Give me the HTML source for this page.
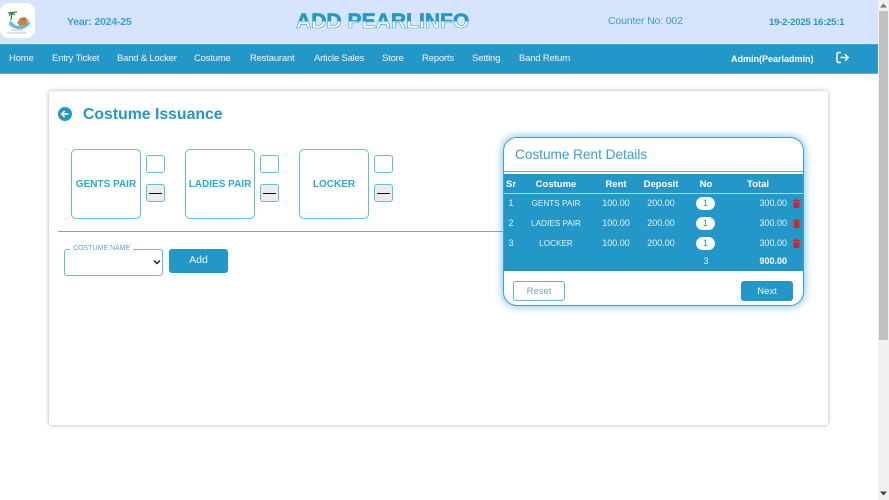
<!DOCTYPE html>
<html><head><meta charset="utf-8"><style>
html,body{margin:0;padding:0;width:889px;height:500px;overflow:hidden;background:#fff;font-family:"Liberation Sans",sans-serif}
.a{position:absolute;white-space:nowrap}
.c{text-align:center;transform:translateX(-50%)}
.r{text-align:right;transform:translateX(-100%)}
.nav{color:#eef7fb;font-size:9.500px;top:53px;letter-spacing:-.2px}
.tile{position:absolute;top:149px;width:68px;height:68px;border:1px solid #5cc0e4;border-radius:5px;background:#fff}
.tl{color:#2fa6d6;font-size:10px;font-weight:bold;top:179px}
.inp{position:absolute;top:155px;width:17px;height:16px;border:1px solid #5cc0e4;border-radius:3px;background:#fff}
.min{position:absolute;top:184px;width:17px;height:16px;border:1px solid #5cc0e4;border-radius:3px;background:#ececec}
.min i{position:absolute;left:2px;right:2px;top:7.500px;height:1.500px;background:#111}
.t{color:#e4f3f9;font-size:9px}
.n{font-size:8.200px;margin-top:1px}
.h{color:#fff;font-size:9.500px;font-weight:bold;top:179px}
.p{position:absolute;left:696px;width:19px;height:13px;background:#fff;border-radius:7px;color:#2497c9;font-size:9px;line-height:13px;text-align:center}
</style></head><body>
<div class="a" style="left:0;top:0;width:878px;height:44px;background:#d6e4fd"></div>
<div class="a" style="left:0;top:44px;width:878px;height:30px;background:#2497c9;box-sizing:border-box;border-top:1px solid #3aa6d6;border-bottom:1px solid #55b6dd"></div>
<div class="a" style="left:0;top:3px;width:35px;height:35px;background:#fff;border-radius:9px"></div>
<svg class="a" style="left:0;top:0" width="35" height="38" viewBox="0 0 35 38"><path d="M8 13L17 12M12 12.500L11 20M9 15.500L12 13L15 15" stroke="#2a7d4a" stroke-width="1.200" fill="none"/><path d="M10 20q4 6 10 6t9-6l1 4q-5 6-12 5t-9-5z" fill="#63bce3"/><path d="M17 23l3-5 5-1 3 3-2 5-6 1z" fill="#c9843f"/><path d="M22 19l3 1" stroke="#3e78a8" stroke-width="1"/><path d="M11 30h12M7 33h20" stroke="#a3adb5" stroke-width=".8"/></svg>
<div class="a" style="left:67px;top:16px;color:#3b9fcf;font-size:10.500px;font-weight:bold;letter-spacing:-.2px">Year: 2024-25</div>
<div class="a" style="left:296px;top:8px;font-size:21px;font-weight:bold;letter-spacing:.05px;line-height:27px;background:linear-gradient(#2497c9 0,#2497c9 50%,#fff 50%,#fff 100%);-webkit-background-clip:text;background-clip:text;color:transparent;-webkit-text-stroke:.6px #2e9fd0">ADD PEARLINFO</div>
<div class="a" style="left:608px;top:15px;color:#3b9fcf;font-size:10.500px;letter-spacing:-.15px">Counter No: 002</div>
<div class="a" style="left:769px;top:17px;color:#2e94c6;font-size:9.500px;font-weight:bold;letter-spacing:-.2px">19-2-2025 16:25:1</div>

<div class="a nav" style="left:9px">Home</div>
<div class="a nav" style="left:52px">Entry Ticket</div>
<div class="a nav" style="left:117px">Band &amp; Locker</div>
<div class="a nav" style="left:194px">Costume</div>
<div class="a nav" style="left:250px">Restaurant</div>
<div class="a nav" style="left:314px">Article Sales</div>
<div class="a nav" style="left:382px">Store</div>
<div class="a nav" style="left:422px">Reports</div>
<div class="a nav" style="left:472px">Setting</div>
<div class="a nav" style="left:519px">Band Return</div>
<div class="a nav" style="left:731px;font-size:9px;top:53.500px;font-weight:bold;color:#fff;letter-spacing:0">Admin(Pearladmin)</div>
<svg class="a" style="left:836px;top:51px" width="14" height="13" viewBox="0 0 14 13" fill="none" stroke="#fff" stroke-width="1.400"><path d="M5 1.500H2.500Q1 1.500 1 3V10Q1 11.500 2.500 11.500H5"/><path d="M4.500 6.500H12M9 3.300L12.300 6.500L9 9.700"/></svg>

<div class="a" style="left:49px;top:91px;width:779px;height:334px;background:#fff;border-radius:3px;box-shadow:0 0 5px rgba(0,0,0,.32)"></div>
<svg class="a" style="left:58px;top:107px" width="14" height="14" viewBox="0 0 14 14"><circle cx="7" cy="7" r="7" fill="#2497c9"/><path d="M10.500 7H4M6.700 4L3.700 7L6.700 10" stroke="#fff" stroke-width="1.600" fill="none"/></svg>
<div class="a" style="left:83px;top:106px;color:#2497c9;font-size:15.800px;font-weight:bold">Costume Issuance</div>

<div class="tile" style="left:71px"></div><div class="a tl c" style="left:106px">GENTS PAIR</div>
<div class="inp" style="left:146px"></div><div class="min" style="left:146px"><i></i></div>
<div class="tile" style="left:185px"></div><div class="a tl c" style="left:220px">LADIES PAIR</div>
<div class="inp" style="left:260px"></div><div class="min" style="left:260px"><i></i></div>
<div class="tile" style="left:299px"></div><div class="a tl c" style="left:334px">LOCKER</div>
<div class="inp" style="left:374px"></div><div class="min" style="left:374px"><i></i></div>

<div class="a" style="left:58px;top:231px;width:450px;height:1px;background:#5ab4d8"></div>

<div class="a" style="left:64px;top:249px;width:97px;height:25px;border:1px solid #5cc0e4;border-radius:3px"></div>
<div class="a" style="left:70px;top:245px;background:#fff;padding:0 3px;color:#5ba8cc;font-size:7px">COSTUME NAME</div>
<svg class="a" style="left:153px;top:259px" width="8" height="6" viewBox="0 0 8 6"><path d="M1 1.500L4 4.500L7 1.500" stroke="#222" stroke-width="1.500" fill="none"/></svg>
<div class="a" style="left:169px;top:249px;width:59px;height:24px;background:#2497c9;border-radius:3px;color:#eef7fb;font-size:10.500px;line-height:23px;text-align:center">Add</div>

<div class="a" style="left:503px;top:137px;width:299px;height:167px;background:#fff;border:1px solid #3ba3d3;border-radius:14px;box-shadow:0 0 7px 2px rgba(70,175,230,.55);overflow:hidden">
  <div style="position:absolute;left:0;top:33px;width:100%;height:1px;background:#5faed2"></div>
  <div style="position:absolute;left:0;top:36px;width:100%;height:97px;background:#2497c9"></div>
  <div style="position:absolute;left:0;top:55px;width:100%;height:1px;background:#a8d8ee"></div>
</div>
<div class="a" style="left:515px;top:147px;color:#3b9fcf;font-size:13.600px">Costume Rent Details</div>

<div class="a h c" style="left:511px">Sr</div>
<div class="a h c" style="left:556px">Costume</div>
<div class="a h c" style="left:616px">Rent</div>
<div class="a h c" style="left:661px">Deposit</div>
<div class="a h c" style="left:706px">No</div>
<div class="a h c" style="left:758px">Total</div>

<div class="a t c" style="left:511px;top:198px">1</div>
<div class="a t n c" style="left:556px;top:198px">GENTS PAIR</div>
<div class="a t c" style="left:616px;top:198px">100.00</div>
<div class="a t c" style="left:661px;top:198px">200.00</div>
<div class="p" style="top:197px">1</div>
<div class="a t r" style="left:787px;top:198px">300.00</div>

<div class="a t c" style="left:511px;top:218px">2</div>
<div class="a t n c" style="left:556px;top:218px">LADIES PAIR</div>
<div class="a t c" style="left:616px;top:218px">100.00</div>
<div class="a t c" style="left:661px;top:218px">200.00</div>
<div class="p" style="top:217px">1</div>
<div class="a t r" style="left:787px;top:218px">300.00</div>

<div class="a t c" style="left:511px;top:238px">3</div>
<div class="a t n c" style="left:556px;top:238px">LOCKER</div>
<div class="a t c" style="left:616px;top:238px">100.00</div>
<div class="a t c" style="left:661px;top:238px">200.00</div>
<div class="p" style="top:237px">1</div>
<div class="a t r" style="left:787px;top:238px">300.00</div>

<svg class="a" style="left:793px;top:199px" width="7" height="9" viewBox="0 0 7 9"><path d="M2.500 0h2v1H7v1H0V1h2.500zM.6 2.500h5.800V9H.6z" fill="#d9202e"/></svg>
<svg class="a" style="left:793px;top:219px" width="7" height="9" viewBox="0 0 7 9"><path d="M2.500 0h2v1H7v1H0V1h2.500zM.6 2.500h5.800V9H.6z" fill="#d9202e"/></svg>
<svg class="a" style="left:793px;top:239px" width="7" height="9" viewBox="0 0 7 9"><path d="M2.500 0h2v1H7v1H0V1h2.500zM.6 2.500h5.800V9H.6z" fill="#d9202e"/></svg>

<div class="a t c" style="left:706px;top:256px">3</div>
<div class="a t r" style="left:787px;top:256px;font-weight:bold;color:#fff">900.00</div>

<div class="a" style="left:513px;top:281px;width:50px;height:18px;border:1px solid #5cb4da;border-radius:3px;color:#6fa8c4;font-size:9.500px;line-height:19px;text-align:center">Reset</div>
<div class="a" style="left:741px;top:281px;width:52px;height:20px;background:#2497c9;border-radius:3px;color:#eef7fb;font-size:9.500px;line-height:21px;text-align:center">Next</div>

<div class="a" style="left:878px;top:0;width:11px;height:500px;background:#f1f1f1"></div>
<div class="a" style="left:879px;top:11px;width:9px;height:329px;background:#c1c1c1"></div>
<svg class="a" style="left:880px;top:3px" width="7" height="5" viewBox="0 0 7 5"><path d="M3.500 0.500L7 4.500H0z" fill="#777"/></svg>
<svg class="a" style="left:880px;top:491px" width="7" height="5" viewBox="0 0 7 5"><path d="M3.500 4.500L7 .5H0z" fill="#444"/></svg>
</body></html>
